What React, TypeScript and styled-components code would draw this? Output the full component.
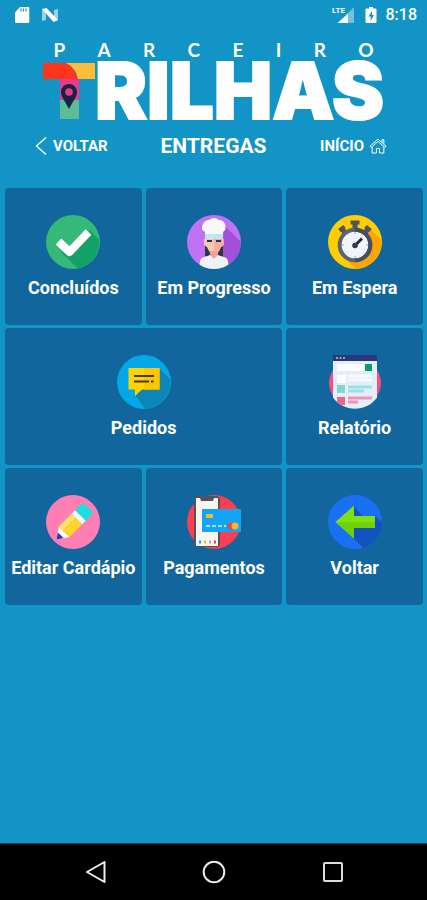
import React from "react";
import styled, { createGlobalStyle } from "styled-components";

const GlobalStyle = createGlobalStyle`
  *, *::before, *::after { box-sizing: border-box; }
  body {
    margin: 0;
    background: #1294c6;
    color: #fff;
    font-family: Roboto, "Liberation Sans", sans-serif;
  }
`;

const Screen = styled.div`
  min-height: 100vh;
  display: flex;
  flex-direction: column;
`;

const StatusBar = styled.div`
  display: flex;
  align-items: center;
  justify-content: space-between;
  height: 30px;
  padding: 0 10px 0 14px;
`;

const StatusGroup = styled.div<{ $gap: number }>`
  display: flex;
  align-items: center;
  gap: ${(p) => p.$gap}px;
`;

const Clock = styled.span`
  font-size: 16px;
  font-weight: 500;
  line-height: 20px;
`;

const Logo = styled.div`
  display: flex;
  flex-direction: column;
  align-items: center;
  padding-top: 10px;
`;

const LogoTop = styled.div`
  display: flex;
  justify-content: space-between;
  width: 320px;
  font-family: Lato, "Liberation Sans", sans-serif;
  font-size: 19px;
  font-weight: 700;
  line-height: 20px;
`;

const LogoMain = styled.div`
  display: flex;
  align-items: baseline;
  height: 64px;
`;

const LogoWord = styled.span`
  font-family: Inter, "Liberation Sans", sans-serif;
  font-size: 78px;
  font-weight: 900;
  line-height: 62px;
  -webkit-text-stroke: 2px #fff;
`;

const Header = styled.header`
  display: grid;
  grid-template-columns: 1fr auto 1fr;
  align-items: center;
  height: 44px;
  padding: 0 35px;
`;

const HeaderButton = styled.button<{ $end?: boolean }>`
  display: flex;
  align-items: center;
  justify-self: ${(p) => (p.$end ? "end" : "start")};
  gap: 5px;
  padding: ${(p) => (p.$end ? "0 5px 0 0" : "0")};
  border: 0;
  background: none;
  color: inherit;
  font-family: inherit;
  font-size: 15px;
  font-weight: 700;
  line-height: 20px;
`;

const Title = styled.h1`
  margin: 0;
  font-size: 21px;
  font-weight: 700;
  line-height: 24px;
`;

const Tiles = styled.main`
  display: grid;
  grid-template-columns: repeat(3, minmax(0, 1fr));
  grid-auto-rows: 137px;
  gap: 3px 4px;
  padding: 20px 4px 20px 5px;
  flex: 1;
  align-content: start;
`;

const Tile = styled.button<{ $wide?: boolean }>`
  grid-column: span ${(p) => (p.$wide ? 2 : 1)};
  display: flex;
  flex-direction: column;
  align-items: center;
  justify-content: center;
  gap: 8px;
  padding: 0;
  border: 0;
  border-radius: 4px;
  background: #11679d;
  color: inherit;
  font-family: inherit;
  font-size: 18px;
  font-weight: 700;
  line-height: 22px;
`;

const NavBar = styled.nav`
  display: grid;
  grid-template-columns: repeat(3, 1fr);
  height: 57px;
  padding: 0 35px 0 37px;
  border-top: 1px solid #0a4a63;
  background: #000;
`;

const NavButton = styled.button`
  display: flex;
  align-items: center;
  justify-content: center;
  padding: 0;
  border: 0;
  background: none;
`;

const SdCard = () => (
  <svg width="16" height="18" viewBox="0 0 16 18" aria-hidden="true">
    <path d="M6 1h8.300q1 0 1 1v14q0 1-1 1H2q-1 0-1-1V6.500z" fill="#fff" />
    <path d="M7 2.500v3M9.500 2.500v3M12 2.500v3" stroke="#1294c6" strokeWidth="1.200" />
  </svg>
);

const NMark = () => (
  <svg width="18" height="16" viewBox="0 0 18 16" aria-hidden="true">
    <path d="M1 2l4 2v9l-4 1zM13 3l4-1v11l-4 1z" fill="#9bd2e8" />
    <path d="M1 2L5.500 1 17 13l-4.500 2z" fill="#fff" />
  </svg>
);

const Signal = () => (
  <svg width="24" height="20" viewBox="0 0 24 20" aria-hidden="true">
    <path d="M22 2v16h-6.500V8.500z" fill="#70c0de" />
    <path d="M5.500 18L16 8.500V18z" fill="#fff" />
    <text x="0" y="8" fill="#fff" fontFamily="Roboto, sans-serif" fontSize="8" fontWeight="700">LTE</text>
  </svg>
);

const Battery = () => (
  <svg width="12" height="18" viewBox="0 0 12 18" aria-hidden="true">
    <path d="M4 1h4v1.500h2.500q1 0 1 1V16q0 1-1 1h-9q-1 0-1-1V3.500q0-1 1-1H4z" fill="#fff" />
    <path d="M7 5L3.500 10.500H5.700V15L9 9H7z" fill="#1294c6" />
  </svg>
);

const LogoT = () => (
  <svg width="52" height="56" viewBox="0 0 52 56" aria-hidden="true">
    <path d="M0 0h26L36 16H0z" fill="#fd351b" />
    <path d="M23 0h29v16H35Q33 5 23 0z" fill="#fdbd36" />
    <path d="M17 16h19v21H17z" fill="#ec3a8a" />
    <path d="M17 37h19v19H17z" fill="#5bbd95" />
    <path d="M26 46C21.500 37 18 34 18 29a8 8 0 0 1 16 0c0 5-3.500 8-8 17z" fill="#182443" />
    <circle cx="26" cy="29" r="3.800" fill="#ec3a8a" />
  </svg>
);

const Chevron = () => (
  <svg width="13" height="20" viewBox="0 0 13 20" fill="none" stroke="#fff" strokeWidth="1.400" aria-hidden="true">
    <path d="M11 1.500L1.500 10l9.500 8.500" />
  </svg>
);

const House = () => (
  <svg width="18" height="18" viewBox="0 0 20 18" fill="none" stroke="#fff" strokeWidth="1.100" aria-hidden="true">
    <path d="M2.500 10.500L1 9.300 10 1.300l9 8-1.500 1.200L10 4z" />
    <path d="M3.500 10v6.800h4.800v-5h3.400v5h4.800V10M14.500 5V2h2v4.500" />
  </svg>
);

type Art = { children: React.ReactNode };

const Badge = ({ children }: Art) => (
  <svg width="54" height="54" viewBox="0 0 54 54" aria-hidden="true">
    {children}
  </svg>
);

const CheckArt = () => (
  <Badge>
    <circle cx="27" cy="27" r="27" fill="#35b878" />
    <path d="M44 15l9 9.500A27 27 0 0 1 32 53.500L14 36l10 4z" fill="#12a166" />
    <path d="M12.500 26.500L23.500 37 42.500 17" fill="none" stroke="#fff" strokeWidth="8" strokeLinejoin="round" />
  </Badge>
);

const ChefArt = () => (
  <Badge>
    <defs>
      <clipPath id="chef"><circle cx="27" cy="27" r="27" /></clipPath>
    </defs>
    <g clipPath="url(#chef)">
      <rect width="54" height="54" fill="#c072f2" />
      <path d="M37 10l20 20v24H34z" fill="#a34fda" />
      <path d="M18 27h4l1 14h-5zM32 27h4v14h-5z" fill="#2c3645" />
      <path d="M17 24h20v5q-1 3-3 3-2 6-7 7-5-1-7-7-2 0-3-3z" fill="#ffc6af" />
      <path d="M27 24h10v5q-1 3-3 3-2 6-7 7z" fill="#f9ae9d" />
      <path d="M23.500 36h7v8h-7z" fill="#f4a58f" />
      <path d="M12 54l1-8q1-4 5-4l5-2 4 4 4-4 5 2q4 0 5 4l1 8z" fill="#eef3f8" />
      <path d="M16 9q2-4 6-4 5-4 10 0 4 0 6 4 2 5-2 8v3H18v-3q-5-3-2-8z" fill="#f7fafd" />
      <path d="M18 19h18v5H18z" fill="#bfe6f6" />
      <path d="M20 26h5M29 26h5" stroke="#27364d" strokeWidth="2" />
    </g>
  </Badge>
);

const StopwatchArt = () => (
  <Badge>
    <circle cx="27" cy="27" r="27" fill="#ffcd00" />
    <path d="M40 12l13.500 13A27 27 0 0 1 28 54L14 41z" fill="#ffa500" />
    <path d="M27 7v7M14 14l4 5M40 14l-4 5" stroke="#4b5367" strokeWidth="5" />
    <path d="M22.500 7.500h9M11.500 15.500l5-4M37.500 11.500l5 4" stroke="#4b5367" strokeWidth="4" />
    <circle cx="27" cy="30" r="15.300" fill="#f2f5fc" stroke="#5b6377" strokeWidth="4" />
    <path d="M27 45.300a15.300 15.300 0 0 0 0-30.600" fill="none" stroke="#464e63" strokeWidth="4" />
    <path d="M27 17v2M27 41v2M14 30h2M38 30h2" stroke="#9aa3b5" />
    <path d="M27 30.500L34 23.500" stroke="#272d3c" strokeWidth="3" />
    <circle cx="27" cy="30.500" r="2.800" fill="#343b4e" />
  </Badge>
);

const ChatArt = () => (
  <Badge>
    <circle cx="27" cy="27" r="27" fill="#06a7e8" />
    <path d="M43 14l10 10A27 27 0 0 1 28 54L18 40z" fill="#0b86b7" />
    <path d="M11.500 13h31v21.500H25L18 41v-6.500h-6.500z" fill="#ffd400" />
    <path d="M27 13h15.500v21.500H27z" fill="#ffc400" />
    <path d="M17 21h20M17 26.500h15M34 26.500h2.500" stroke="#3d3a31" strokeWidth="2" />
  </Badge>
);

const ReportArt = () => (
  <Badge>
    <defs>
      <clipPath id="page"><path d="M5 0H49V42.500A27 27 0 0 1 5 42.500Z" /></clipPath>
    </defs>
    <path d="M5 15v26Q-3 28 5 15zM49 15v26Q57 28 49 15z" fill="#f0527f" />
    <g clipPath="url(#page)">
      <rect x="5" y="0" width="44" height="54" fill="#e3edfc" />
      <rect x="5" y="0" width="44" height="6" fill="#29377f" />
      <path d="M8 3h2M11.500 3h2M15 3h2" stroke="#f2bc5b" strokeWidth="1.500" />
      <path d="M9 9h27v7H9zM9 20h9v8H9z" fill="#fff" />
      <rect x="37" y="9" width="7" height="7" fill="#0d9b70" />
      <path d="M20 21h24M20 25h24" stroke="#f6f9ff" strokeWidth="3" />
      <rect x="9" y="30" width="8" height="8" fill="#7fdacd" />
      <path d="M20 32h24M20 36h16" stroke="#9ae3dc" strokeWidth="3" />
      <path d="M9 42h8v8H9z" fill="#f0638c" />
      <path d="M20 43h24M20 47h10" stroke="#f394b5" strokeWidth="3" />
    </g>
  </Badge>
);

const PencilArt = () => (
  <Badge>
    <circle cx="27" cy="27" r="27" fill="#ff7fb5" />
    <g transform="translate(10.500 44.500) rotate(-45)">
      <path d="M0 0L11-7.500V7.500z" fill="#fff" />
      <path d="M0 0L6-4V4z" fill="#3034b9" />
      <path d="M10-7.500h19v15H10L12 3.500 10 0l2-3.500z" fill="#ffd329" />
      <path d="M10-7.500h19V-2.500H11z" fill="#ffe56e" />
      <path d="M29-7.500h5v15h-5z" fill="#f3faff" />
      <path d="M34-7.500h8q3 0 3 3v9q0 3-3 3h-8z" fill="#1de0dc" />
    </g>
  </Badge>
);

const PaymentArt = () => (
  <Badge>
    <circle cx="27" cy="27" r="27" fill="#fb3f50" />
    <rect x="7" y="1" width="26" height="51" rx="4" fill="#52545d" />
    <path d="M9 3h4l1 3h12l1-3h4v48H9z" fill="#f8f5ef" />
    <path d="M12 47h2" stroke="#1d9cf0" strokeWidth="3" />
    <path d="M17 47h2" stroke="#f4b83a" strokeWidth="3" />
    <path d="M22 47h2" stroke="#b0b0b0" strokeWidth="3" />
    <path d="M27 47h2" stroke="#e9445a" strokeWidth="3" />
    <rect x="15" y="14" width="39" height="23" rx="1" fill="#12a4f7" />
    <rect x="19" y="19" width="7" height="4" fill="#f0b83d" />
    <path d="M19 31h20" stroke="#a8e0ff" strokeWidth="2" strokeDasharray="4 2" />
    <circle cx="44" cy="31" r="3.500" fill="#ee4b2f" />
    <circle cx="48" cy="31" r="3.500" fill="#f9b33a" />
  </Badge>
);

const BackArt = () => (
  <Badge>
    <circle cx="27" cy="27" r="27" fill="#1a70f5" />
    <path d="M26 11l9 10h12l7 6A27 27 0 0 1 35 53L25 43z" fill="#1253bd" />
    <path d="M7.500 27L26 10.500V21h21v12H26v10.500z" fill="#7ee00c" />
    <path d="M7.500 27H47v6H26v10.500z" fill="#6fd00b" />
  </Badge>
);

const tiles = [
  { label: "Concluídos", art: <CheckArt /> },
  { label: "Em Progresso", art: <ChefArt /> },
  { label: "Em Espera", art: <StopwatchArt /> },
  { label: "Pedidos", art: <ChatArt />, wide: true },
  { label: "Relatório", art: <ReportArt /> },
  { label: "Editar Cardápio", art: <PencilArt /> },
  { label: "Pagamentos", art: <PaymentArt /> },
  { label: "Voltar", art: <BackArt /> },
];

export default function App() {
  return (
    <>
      <GlobalStyle />
      <Screen>
        <StatusBar>
          <StatusGroup $gap={11}>
            <SdCard />
            <NMark />
          </StatusGroup>
          <StatusGroup $gap={9}>
            <Signal />
            <Battery />
            <Clock>8:18</Clock>
          </StatusGroup>
        </StatusBar>
        <Logo>
          <LogoTop>
            {"PARCEIRO".split("").map((letter, i) => (
              <span key={i}>{letter}</span>
            ))}
          </LogoTop>
          <LogoMain>
            <LogoT />
            <LogoWord>RILHAS</LogoWord>
          </LogoMain>
        </Logo>
        <Header>
          <HeaderButton>
            <Chevron />
            VOLTAR
          </HeaderButton>
          <Title>ENTREGAS</Title>
          <HeaderButton $end>
            INÍCIO
            <House />
          </HeaderButton>
        </Header>
        <Tiles>
          {tiles.map((t) => (
            <Tile key={t.label} $wide={t.wide}>
              {t.art}
              {t.label}
            </Tile>
          ))}
        </Tiles>
        <NavBar>
          <NavButton aria-label="Voltar">
            <svg width="24" height="24" viewBox="0 0 24 24" fill="none" stroke="#eee" strokeWidth="2" strokeLinejoin="round">
              <path d="M3 12L20.500 2v20z" />
            </svg>
          </NavButton>
          <NavButton aria-label="Início">
            <svg width="24" height="24" viewBox="0 0 24 24" fill="none" stroke="#eee" strokeWidth="2">
              <circle cx="12" cy="12" r="10.300" />
            </svg>
          </NavButton>
          <NavButton aria-label="Recentes">
            <svg width="24" height="24" viewBox="0 0 24 24" fill="none" stroke="#ddd" strokeWidth="2">
              <rect x="3" y="3" width="18" height="18" rx="1" />
            </svg>
          </NavButton>
        </NavBar>
      </Screen>
    </>
  );
}
